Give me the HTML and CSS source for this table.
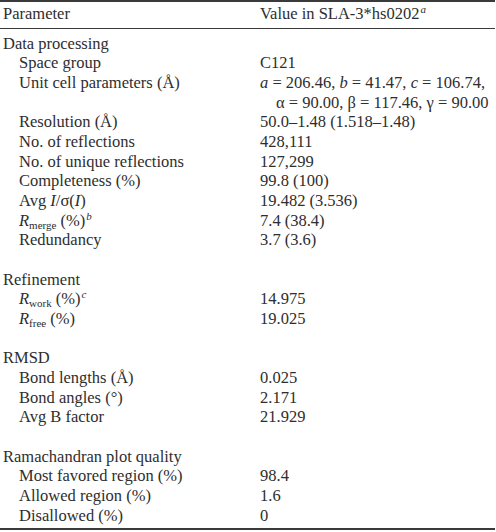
FILE: index.html
```html
<!DOCTYPE html>
<html lang="en">
<head>
    <meta charset="UTF-8">
    <title>Crystallographic data</title>
    <link rel="stylesheet" href="styles.css">
</head>
<body>
    <table class="data-table">
        <thead>
            <tr>
                <th>Parameter</th>
                <th>Value in SLA-3*hs0202<sup>a</sup></th>
            </tr>
        </thead>
        <tbody>
            <tr class="first"><td class="group" colspan="2">Data processing</td></tr>
            <tr><td class="item">Space group</td><td>C121</td></tr>
            <tr><td class="item">Unit cell parameters (Å)</td><td><i>a</i> = 206.46, <i>b</i> = 41.47, <i>c</i> = 106.74,</td></tr>
            <tr><td></td><td class="cont">α = 90.00, β = 117.46, γ = 90.00</td></tr>
            <tr><td class="item">Resolution (Å)</td><td>50.0–1.48 (1.518–1.48)</td></tr>
            <tr><td class="item">No. of reflections</td><td>428,111</td></tr>
            <tr><td class="item">No. of unique reflections</td><td>127,299</td></tr>
            <tr><td class="item">Completeness (%)</td><td>99.8 (100)</td></tr>
            <tr><td class="item">Avg <i>I</i>/σ(<i>I</i>)</td><td>19.482 (3.536)</td></tr>
            <tr><td class="item"><i>R</i><sub>merge</sub> (%)<sup>b</sup></td><td>7.4 (38.4)</td></tr>
            <tr><td class="item">Redundancy</td><td>3.7 (3.6)</td></tr>
            <tr class="gap"><td colspan="2">&nbsp;</td></tr>

            <tr><td class="group" colspan="2">Refinement</td></tr>
            <tr><td class="item"><i>R</i><sub>work</sub> (%)<sup>c</sup></td><td>14.975</td></tr>
            <tr><td class="item"><i>R</i><sub>free</sub> (%)</td><td>19.025</td></tr>
            <tr class="gap"><td colspan="2">&nbsp;</td></tr>

            <tr><td class="group" colspan="2">RMSD</td></tr>
            <tr><td class="item">Bond lengths (Å)</td><td>0.025</td></tr>
            <tr><td class="item">Bond angles (°)</td><td>2.171</td></tr>
            <tr><td class="item">Avg B factor</td><td>21.929</td></tr>
            <tr class="gap"><td colspan="2">&nbsp;</td></tr>

            <tr><td class="group" colspan="2">Ramachandran plot quality</td></tr>
            <tr><td class="item">Most favored region (%)</td><td>98.4</td></tr>
            <tr><td class="item">Allowed region (%)</td><td>1.6</td></tr>
            <tr class="last"><td class="item">Disallowed (%)</td><td>0</td></tr>
        </tbody>
    </table>
</body>
</html>
```

FILE: styles.css
```css
* {
    margin: 0;
    padding: 0;
    box-sizing: border-box;
}

body {
    background-color: #ffffff;
    font-family: "Liberation Serif", "Times New Roman", serif;
    font-size: 16.5px;
    color: #2e2e2e;
}

/* Table */
.data-table {
    width: 495px;
    border-collapse: collapse;
    border-top: 2px solid #3a3a3a;
    border-bottom: 2px solid #3a3a3a;
}

.data-table th,
.data-table td {
    font-weight: normal;
    text-align: left;
    line-height: 19.67px;
    padding: 0;
    white-space: nowrap;
    vertical-align: top;
}

.data-table th {
    padding-top: 2px;
    padding-bottom: 4px;
    border-bottom: 1px solid #3a3a3a;
}

.data-table th:first-child,
.data-table td.group {
    padding-left: 3px;
}

.data-table th:first-child {
    width: 260px;
}

.data-table td.item {
    padding-left: 19px;
    width: 260px;
}

.data-table td.cont {
    padding-left: 16px;
}

.data-table tr.first td {
    padding-top: 5px;
}

.data-table tr.last td {
    padding-bottom: 3px;
}

sup,
sub {
    font-size: 11px;
    line-height: 0;
    position: relative;
}

sup {
    font-style: italic;
    vertical-align: baseline;
    top: -6px;
    margin-left: 1px;
}

sub {
    vertical-align: baseline;
    top: 3px;
}
```
